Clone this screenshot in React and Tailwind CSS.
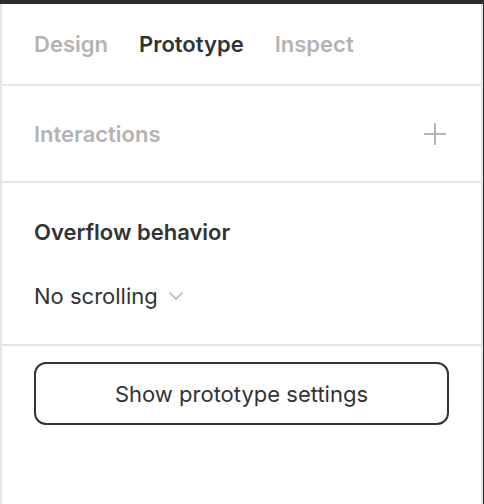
import { useState } from 'react'

const tabs = ['Design', 'Prototype', 'Inspect']

function App() {
  const [active, setActive] = useState('Prototype')

  return (
    <div className="h-screen flex flex-col bg-white text-[#333333]"
         style={{ fontFamily: 'Inter, "Noto Sans", sans-serif' }}>

      {/* Top toolbar edge */}
      <div className="h-[4px] bg-[#2c2c2c] shrink-0" />

      <div className="flex flex-1 min-h-0">
        {/* Properties panel */}
        <div className="flex-1 flex flex-col border-l-2 border-r-2 border-[#e5e5e5]">

          {/* Tabs */}
          <div className="h-[82px] shrink-0 flex items-center gap-[31px] px-[32px] border-b-2 border-[#e5e5e5]">
            {tabs.map((t) => (
              <button
                key={t}
                onClick={() => setActive(t)}
                className={`text-[22px] leading-[24px] font-semibold ${
                  active === t ? 'text-[#333333]' : 'text-[#b3b3b3]'
                }`}
              >
                {t}
              </button>
            ))}
          </div>

          {/* Interactions */}
          <div className="h-[97px] shrink-0 flex items-center justify-between pl-[32px] pr-[34px] border-b-2 border-[#e5e5e5]">
            <span className="text-[22px] leading-[24px] font-semibold text-[#b3b3b3]">
              Interactions
            </span>
            <svg width="24" height="24" viewBox="0 0 24 24" fill="none">
              <path d="M12 1v22M1 12h22" stroke="#b3b3b3" strokeWidth="2" />
            </svg>
          </div>

          {/* Overflow behavior */}
          <div className="px-[32px] pt-[37px] pb-[36px] border-b-2 border-[#e5e5e5]">
            <div className="text-[22px] leading-[24px] font-semibold">Overflow behavior</div>
            <div className="mt-[40px] h-[24px] flex items-center gap-[11px]">
              <span className="text-[22px] leading-[24px]">No scrolling</span>
              <svg width="14" height="8" viewBox="0 0 14 8" fill="none">
                <path d="M0.5 0.5l6.5 6.5 6.5-6.5" stroke="#b3b3b3" strokeWidth="1.5" />
              </svg>
            </div>
          </div>

          {/* Settings button */}
          <div className="px-[32px] pt-[16px]">
            <button className="w-[415px] h-[63px] border-2 border-[#333333] rounded-[12px]
                               text-[22px] leading-[24px] text-[#333333]">
              Show prototype settings
            </button>
          </div>
        </div>

        {/* Canvas edge */}
        <div className="w-[3px] bg-[#2c2c2c] shrink-0" />
      </div>
    </div>
  )
}

export default App
